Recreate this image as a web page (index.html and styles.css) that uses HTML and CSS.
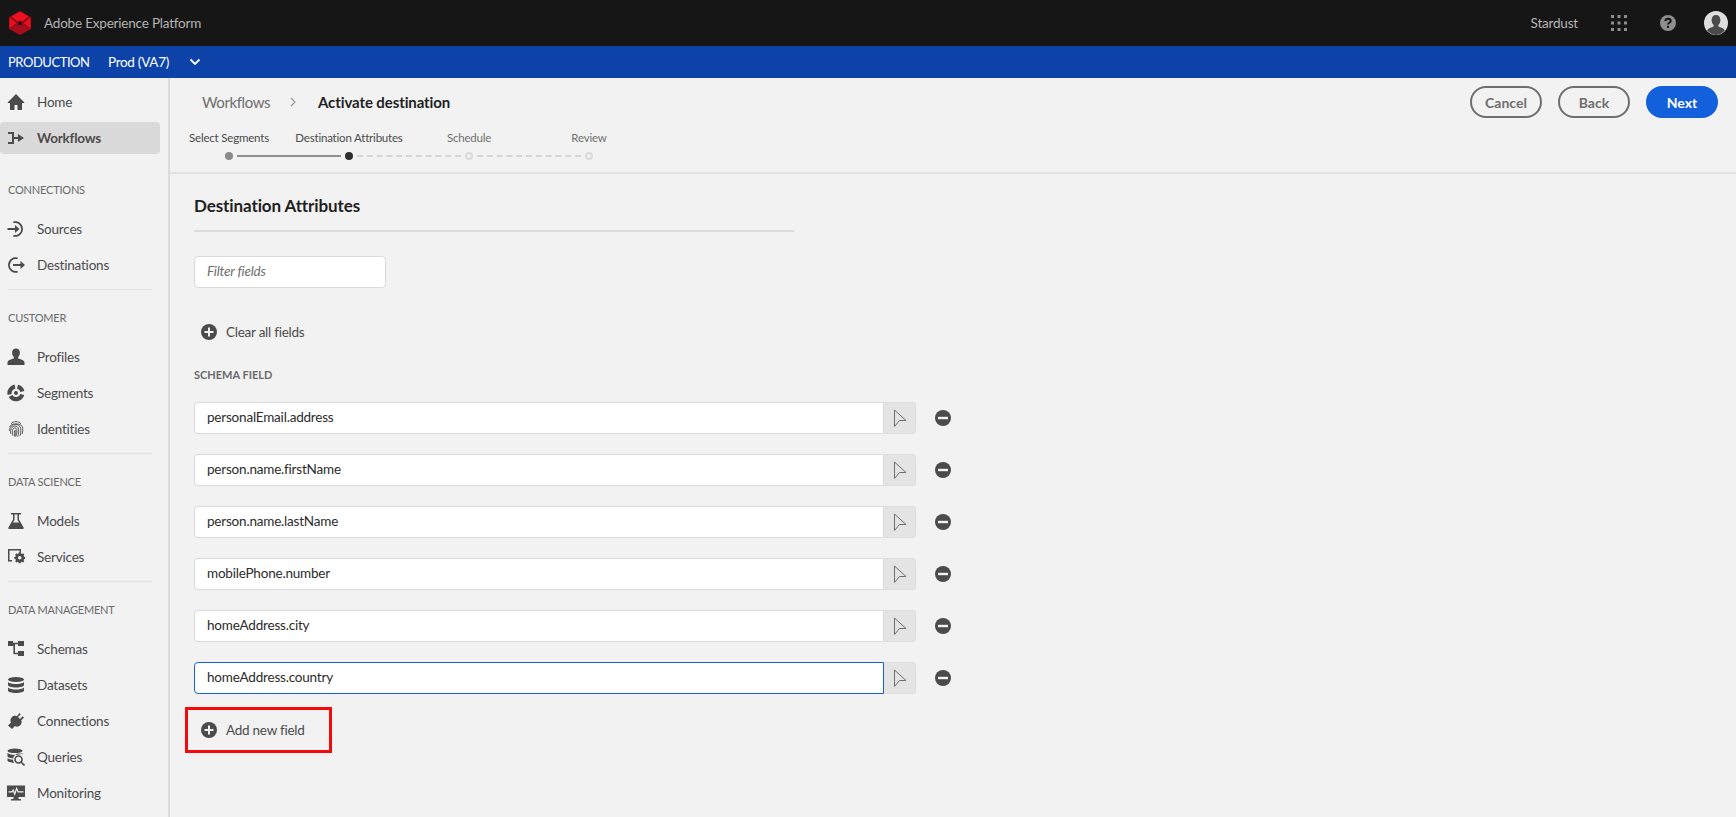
FILE: index.html
```html
<!DOCTYPE html>
<html lang="en">
<head>
<meta charset="utf-8">
<title>Activate destination</title>
<link rel="stylesheet" href="styles.css">
</head>
<body>
<header class="topbar">
  <svg class="logo" viewBox="0 0 22 24"><path fill="#8a0d1a" d="M11 0 22 6v12l-11 6L0 18V6z"/><path fill="#f0101f" d="M11 .5 2.500 5.500 8 10h6l5.500-4.500z"/><path fill="#ee0f1e" d="M.5 6.500 7.500 12 .5 17zM21.500 6.500 14.500 12l7 5z"/><path fill="#a50d1a" d="M7.500 13h7l7 5L11 24 .5 18z"/><path fill="#1d1012" d="M11 9.500 8.500 14.500 11 13.500l2.500 1z"/></svg>
  <span class="product">Adobe Experience Platform</span>
  <span class="org">Stardust</span>
  <svg class="apps" viewBox="0 0 16 16"><g fill="#8e8e8e"><rect width="3" height="3"/><rect x="6.500" width="3" height="3"/><rect x="13" width="3" height="3"/><rect y="6.500" width="3" height="3"/><rect x="6.500" y="6.500" width="3" height="3"/><rect x="13" y="6.500" width="3" height="3"/><rect y="13" width="3" height="3"/><rect x="6.500" y="13" width="3" height="3"/><rect x="13" y="13" width="3" height="3"/></g></svg>
  <svg class="help" viewBox="0 0 16 16"><circle cx="8" cy="8" r="8" fill="#8e8e8e"/><path fill="none" stroke="#161616" stroke-width="2" d="M5.300 6.200C5.500 4.500 6.600 3.700 8 3.700c1.600 0 2.700 1 2.700 2.200 0 1.800-2.700 1.900-2.700 3.700"/><rect x="7" y="10.800" width="2" height="2" fill="#161616"/></svg>
  <svg class="avatar" viewBox="0 0 24 24"><circle cx="12" cy="12" r="12" fill="#dedede"/><path fill="#4b4b4b" d="M12 4c2.800 0 4.400 2 4.400 5 0 2.300-.9 4-2 5v1.500c2 .9 5.600 1.500 6.300 4A12 12 0 0 1 12 24a12 12 0 0 1-8.700-4.500c.7-2.500 4.300-3.100 6.300-4V14c-1.100-1-2-2.700-2-5 0-3 1.600-5 4.400-5z"/></svg>
</header>
<div class="envbar">
  <span class="env">PRODUCTION</span>
  <span class="sandbox">Prod (VA7)</span>
  <svg class="chev" viewBox="0 0 12 8"><path fill="none" stroke="#fff" stroke-width="1.800" d="M1.500 1.500 6 6l4.500-4.500"/></svg>
</div>
<div class="shell">
  <nav class="sidebar">
    <a class="nav-item"><svg class="ni" viewBox="0 0 18 18"><path d="M9 1 .5 9.500 1 10h2v7h4.500v-5h3v5H15v-7h2l.5-.5z"/></svg>Home</a>
    <a class="nav-item active"><svg class="ni" viewBox="0 0 18 18"><path d="M1 3h6v5h4V5l6 4-6 4v-3H7v5H1v-2h4V5H1z"/></svg>Workflows</a>
    <h4 class="nav-label first">CONNECTIONS</h4>
    <a class="nav-item"><svg class="ni" viewBox="0 0 18 18"><path d="M6 1.500A7.800 7.800 0 1 1 6 16.500l.6-1.600A6.100 6.100 0 1 0 6.600 3.100zM.5 8.100h7.500V5l4.500 4L8 13v-3.100H.5z"/></svg>Sources</a>
    <a class="nav-item"><svg class="ni" viewBox="0 0 18 18"><path d="M11 1.500a7.800 7.800 0 1 0 0 15l-.6-1.600a6.100 6.100 0 1 1 0-11.800zM6 8.100h7.500V5l4.500 4-4.500 4V9.900H6z"/></svg>Destinations</a>
    <hr class="nav-rule">
    <h4 class="nav-label">CUSTOMER</h4>
    <a class="nav-item"><svg class="ni" viewBox="0 0 18 18"><path d="M9 .5c2.500 0 3.900 1.800 3.900 4.300 0 1.900-.8 3.400-1.700 4.200v1.500c2.200.8 5.800 1.300 6.300 3.800v2.700H.5v-2.700c.5-2.500 4.100-3 6.300-3.800V9C5.900 8.200 5.100 6.700 5.100 4.800 5.100 2.300 6.500.5 9 .5z"/></svg>Profiles</a>
    <a class="nav-item"><svg class="ni" viewBox="0 0 18 18"><g fill="none" stroke="#4b4b4b" stroke-width="4.200"><path d="M2.700 10.500A6.500 6.500 0 0 1 8 2.600"/><path d="M10.500 2.700A6.500 6.500 0 0 1 15.400 7.500"/><path d="M15.300 10.500A6.500 6.500 0 0 1 3.500 12"/></g><path d="M10.800 8.200A2 2 0 1 0 9 11a2 2 0 0 0 1.800-1.200z"/></svg>Segments</a>
    <a class="nav-item"><svg class="ni" viewBox="0 0 18 18"><g fill="none" stroke="#4b4b4b" stroke-width=".9"><path d="M4 3.600C6.500 1 11.500 1 14 3.600"/><path d="M2.500 7C4 2.800 14 2.800 15.500 7c.4 2 .4 4.500-.3 7"/><path d="M2.300 11C2.200 7 5.500 4.500 9 4.500c3.500 0 4.900 3 4.900 5.500 0 2-.2 4-.9 6"/><path d="M3.800 14c-.4-3-.3-5 1-6.500 2-2 5-1.800 6.300.2 1 1.800.6 6-.4 9"/><path d="M6 15.800c-.6-2.500-1.200-5 0-7 1-1.400 3-1.200 3.800.5.600 2-.2 5-1 7.200"/><path d="M8 16.800c-.3-2-1-4.500-.4-6 .4-.8 1-.8 1.200 0 .2 2-.4 3.500-1 5"/></g></svg>Identities</a>
    <hr class="nav-rule">
    <h4 class="nav-label">DATA SCIENCE</h4>
    <a class="nav-item"><svg class="ni" viewBox="0 0 18 18"><path d="M4 1h10v1.500h-2v5l4.600 8c.4 1-.2 1.500-1 1.500H2.400c-.8 0-1.400-.5-1-1.500l4.600-8v-5H4zm3.500 1.500v5.400L6 10.500h6l-1.500-2.600V2.500z"/></svg>Models</a>
    <a class="nav-item"><svg class="ni" viewBox="0 0 18 18"><path d="M1 1h13v5h-1.500V2.500h-10V12H5v1.500H1z"/><path d="M11.500 6.500h2l.3 1.400 1.200.5 1.200-.8 1.400 1.400-.8 1.200.5 1.200 1.300.3v2l-1.300.3-.5 1.200.8 1.200-1.400 1.400-1.200-.8-1.200.5-.3 1.200h-2l-.3-1.200-1.200-.5-1.200.8-1.400-1.400.8-1.200-.5-1.200-1.300-.3v-2l1.300-.3.5-1.200-.8-1.200 1.400-1.400 1.200.8 1.200-.5zM12.500 10.500a2 2 0 1 0 0 4 2 2 0 0 0 0-4z" fill-rule="evenodd" transform="translate(1.500 -1.500) scale(.9)"/></svg>Services</a>
    <hr class="nav-rule">
    <h4 class="nav-label">DATA MANAGEMENT</h4>
    <a class="nav-item"><svg class="ni" viewBox="0 0 18 18"><rect x="1" y="1" width="5" height="5"/><rect x="11" y="1" width="6" height="5"/><rect x="11" y="11" width="6" height="5"/><path d="M6 2.700h5v1.600H8V12.700h3v1.600H6.400V6H6z"/></svg>Schemas</a>
    <a class="nav-item"><svg class="ni" viewBox="0 0 18 18"><ellipse cx="9" cy="3.500" rx="8" ry="2.500"/><path d="M1 6c1.500 1.500 4.500 2 8 2s6.500-.5 8-2v3c0 1.400-3.600 2.500-8 2.500S1 10.400 1 9zM1 11.500c1.500 1.500 4.500 2 8 2s6.500-.5 8-2v3C17 15.900 13.400 17 9 17s-8-1.100-8-2.500z"/></svg>Datasets</a>
    <a class="nav-item"><svg class="ni" viewBox="0 0 18 18"><path d="M12.500 1l1.300 1.300L11 5l2 2 2.700-2.700L17 5.600 14.300 8.300c.8 2 .2 3.700-1 5-1.500 1.500-3.500 1.800-5.300.8l-3 3L1 13.500l3-3c-1-1.800-.7-3.800.8-5.300 1.300-1.200 3-1.800 5-1z"/></svg>Connections</a>
    <a class="nav-item"><svg class="ni" viewBox="0 0 18 18"><ellipse cx="8" cy="2.800" rx="7.500" ry="2.300"/><path d="M.5 5c1.500 1.300 4 1.800 7.500 1.800S14 6.300 15.500 5v1.500a6 6 0 0 0-9.400 3.900C3 10.200.5 9.400.5 8.300zM.5 10.300c1.200.8 3 1.300 5.500 1.500a6 6 0 0 0 1.200 3c-3.600-.1-6.700-1-6.700-2.300z"/><path fill="none" stroke="#4b4b4b" stroke-width="1.600" d="M11.500 8a3.500 3.500 0 1 1 0 7 3.500 3.500 0 0 1 0-7zM14 14l3.500 3.500"/></svg>Queries</a>
    <a class="nav-item"><svg class="ni" viewBox="0 0 18 18"><path d="M0 1.500h18V13h-6.500v2H14v1.500H4V15h2.500v-2H0z"/><path fill="none" stroke="#f2f2f2" stroke-width="1.200" d="M1.500 7.800H5l1.200-1.800 1.500 4.200L9.600 4.500l1.500 3.300h5.400"/></svg>Monitoring</a>
  </nav>
  <main class="main">
    <section class="pagehead">
      <div class="headrow">
        <div class="crumbs">
          <span class="crumb">Workflows</span>
          <svg class="crumb-sep" viewBox="0 0 6 10"><path fill="none" stroke="#9a9a9a" stroke-width="1.200" d="M1 1l4 4-4 4"/></svg>
          <strong class="crumb-now">Activate destination</strong>
        </div>
        <div class="actions">
          <button class="btn">Cancel</button>
          <button class="btn">Back</button>
          <button class="btn primary">Next</button>
        </div>
      </div>
      <ol class="steps">
        <li class="step done"><span class="step-label">Select Segments</span><span class="track"><i class="dot"></i></span></li>
        <li class="step current"><span class="step-label">Destination Attributes</span><span class="track"><i class="dot"></i></span></li>
        <li class="step todo"><span class="step-label">Schedule</span><span class="track"><i class="dot"></i></span></li>
        <li class="step todo"><span class="step-label">Review</span><span class="track"><i class="dot"></i></span></li>
      </ol>
    </section>
    <section class="content">
      <h2 class="title">Destination Attributes</h2>
      <div class="filter">Filter fields</div>
      <button class="link"><svg class="round" viewBox="0 0 16 16"><circle cx="8" cy="8" r="8"/><path class="glyph" d="M7 3.500h2V7h3.500v2H9v3.500H7V9H3.500V7H7z"/></svg>Clear all fields</button>
      <div class="col-head">SCHEMA FIELD</div>
      <div class="fields">
        <div class="field"><div class="value">personalEmail.address</div><span class="pick"><svg class="cursor" viewBox="0 0 14 19"><path d="M1.500 1v16.500l5-6h6.500z"/></svg></span><svg class="round minus" viewBox="0 0 16 16"><circle cx="8" cy="8" r="8"/><rect class="glyph" x="3" y="6.800" width="10" height="2.400"/></svg></div>
        <div class="field"><div class="value">person.name.firstName</div><span class="pick"><svg class="cursor" viewBox="0 0 14 19"><path d="M1.500 1v16.500l5-6h6.500z"/></svg></span><svg class="round minus" viewBox="0 0 16 16"><circle cx="8" cy="8" r="8"/><rect class="glyph" x="3" y="6.800" width="10" height="2.400"/></svg></div>
        <div class="field"><div class="value">person.name.lastName</div><span class="pick"><svg class="cursor" viewBox="0 0 14 19"><path d="M1.500 1v16.500l5-6h6.500z"/></svg></span><svg class="round minus" viewBox="0 0 16 16"><circle cx="8" cy="8" r="8"/><rect class="glyph" x="3" y="6.800" width="10" height="2.400"/></svg></div>
        <div class="field"><div class="value">mobilePhone.number</div><span class="pick"><svg class="cursor" viewBox="0 0 14 19"><path d="M1.500 1v16.500l5-6h6.500z"/></svg></span><svg class="round minus" viewBox="0 0 16 16"><circle cx="8" cy="8" r="8"/><rect class="glyph" x="3" y="6.800" width="10" height="2.400"/></svg></div>
        <div class="field"><div class="value">homeAddress.city</div><span class="pick"><svg class="cursor" viewBox="0 0 14 19"><path d="M1.500 1v16.500l5-6h6.500z"/></svg></span><svg class="round minus" viewBox="0 0 16 16"><circle cx="8" cy="8" r="8"/><rect class="glyph" x="3" y="6.800" width="10" height="2.400"/></svg></div>
        <div class="field focused"><div class="value">homeAddress.country</div><span class="pick"><svg class="cursor" viewBox="0 0 14 19"><path d="M1.500 1v16.500l5-6h6.500z"/></svg></span><svg class="round minus" viewBox="0 0 16 16"><circle cx="8" cy="8" r="8"/><rect class="glyph" x="3" y="6.800" width="10" height="2.400"/></svg></div>
      </div>
      <button class="link add"><svg class="round" viewBox="0 0 16 16"><circle cx="8" cy="8" r="8"/><path class="glyph" d="M7 3.500h2V7h3.500v2H9v3.500H7V9H3.500V7H7z"/></svg>Add new field</button>
    </section>
  </main>
</div>
</body>
</html>
```
FILE: styles.css
```css
* { box-sizing: border-box; }
html, body { height: 100%; }
body {
  margin: 0;
  height: 817px;
  overflow: hidden;
  display: flex;
  flex-direction: column;
  background: #f2f2f2;
  color: #4b4b4b;
  font-family: "Lato", "Liberation Sans", sans-serif;
  font-size: 13.500px;
  letter-spacing: -.2px;
}
.topbar {
  flex: 0 0 46px;
  display: flex;
  align-items: center;
  background: #161616;
  padding: 0 8px 0 9px;
}
.logo { width: 22px; height: 24px; margin-right: 13px; }
.product { color: #b4b4b4; }
.org { margin-left: auto; color: #b4b4b4; }
.apps { width: 16px; height: 16px; margin-left: 33px; }
.help { width: 16px; height: 16px; margin-left: 33px; }
.avatar { width: 24px; height: 24px; margin-left: 28px; }
.envbar {
  flex: 0 0 32px;
  display: flex;
  align-items: center;
  background: #0d43a9;
  color: #fff;
  padding-left: 8px;
}
.env { font-size: 13px; letter-spacing: -.45px; width: 100px; }
.sandbox { font-size: 13.500px; letter-spacing: -.3px; width: 81px; }
.chev { width: 12px; height: 8px; }
.shell { flex: 1; display: flex; min-height: 0; }
.sidebar {
  flex: 0 0 170px;
  border-right: 2px solid #dcdcdc;
  padding: 6px 0 0;
}
.nav-item {
  display: flex;
  align-items: center;
  height: 36px;
  padding-left: 7px;
  width: 160px;
  color: #4b4b4b;
}
.nav-item.active {
  height: 32px;
  margin: 2px 0;
  background: #dadada;
  border-radius: 4px;
  font-weight: 700;
}
.ni { width: 18px; height: 18px; margin-right: 12px; fill: #4b4b4b; flex: none; }
.nav-label {
  margin: 0;
  padding: 21px 0 14px 8px;
  font-size: 11px;
  line-height: 14px;
  font-weight: 400;
  letter-spacing: -.2px;
  color: #6a6a6a;
}
.nav-label.first { padding-top: 27px; }
.nav-rule {
  margin: 6px 0 0 8px;
  width: 144px;
  border: 0;
  border-top: 1px solid #e1e1e1;
}
.main { flex: 1; min-width: 0; }
.pagehead {
  height: 96px;
  border-bottom: 2px solid #e1e1e1;
  padding-top: 8px;
}
.headrow {
  display: flex;
  justify-content: space-between;
  align-items: center;
  height: 32px;
  padding: 0 18px 0 32px;
}
.crumbs { display: flex; align-items: center; }
.crumb { font-size: 15px; letter-spacing: -.4px; color: #6e6e6e; width: 88px; }
.crumb-sep { width: 6px; height: 10px; margin-right: 22px; }
.crumb-now { font-size: 15px; letter-spacing: -.1px; color: #1f1f1f; font-weight: 700; }
.actions { display: flex; gap: 16px; }
.btn {
  width: 72px;
  height: 32px;
  border: 2px solid #6e6e6e;
  border-radius: 16px;
  background: transparent;
  font: 700 14px "Lato", "Liberation Sans", sans-serif;
  color: #6e6e6e;
  padding: 0;
}
.btn.primary { background: #1360dc; border-color: #1360dc; color: #fff; }
.steps {
  list-style: none;
  display: flex;
  margin: 12px 0 0 -1px;
  padding: 0;
}
.step {
  width: 120px;
  display: flex;
  flex-direction: column;
  align-items: center;
  position: relative;
}
.step-label { font-size: 11.500px; letter-spacing: -.2px; line-height: 16px; white-space: nowrap; color: #4b4b4b; }
.step.todo .step-label { color: #707070; }
.track {
  height: 8px;
  margin-top: 6px;
  align-self: stretch;
  display: flex;
  justify-content: center;
  position: relative;
}
.dot { width: 8px; height: 8px; border-radius: 50%; background: #8a8a8a; }
.step.current .dot { background: #2f2f2f; }
.step.todo .dot { background: transparent; border: 2px solid #dadada; }
.step:not(:first-child) .track::before {
  content: "";
  position: absolute;
  right: calc(50% + 8px);
  top: 3px;
  width: 104px;
}
.step.current .track::before { border-top: 2px solid #8f8f8f; }
.step.todo .track::before { border-top: 2px dashed #d5d5d5; }
.content { padding: 0 0 0 24px; }
.title {
  margin: 0;
  width: 600px;
  height: 58px;
  padding-top: 20px;
  line-height: 24px;
  font-size: 17px;
  font-weight: 700;
  letter-spacing: -.1px;
  color: #1f1f1f;
  border-bottom: 2px solid #dcdcdc;
}
.filter {
  width: 192px;
  height: 32px;
  margin-top: 24px;
  line-height: 28px;
  padding-left: 12px;
  background: #fff;
  border: 1px solid #dadada;
  border-radius: 4px;
  font-style: italic;
  color: #6e6e6e;
}
.link {
  display: flex;
  align-items: center;
  background: none;
  border: 0;
  padding: 0;
  font: 400 13.500px "Lato", "Liberation Sans", sans-serif;
  letter-spacing: -.25px;
  color: #4b4b4b;
}
.round { width: 16px; height: 16px; margin-right: 9px; fill: #4b4b4b; flex: none; }
.round .glyph { fill: #f2f2f2; }
.content > .link { margin: 28px 0 0 7px; height: 32px; padding-left: 0; }
.col-head {
  margin-top: 20px;
  font-size: 11px;
  line-height: 14px;
  font-weight: 700;
  letter-spacing: 0;
  color: #6a6a6a;
}
.fields { margin-top: 20px; display: flex; flex-direction: column; gap: 20px; }
.field { display: flex; align-items: center; height: 32px; }
.value {
  width: 690px;
  height: 32px;
  line-height: 28px;
  padding-left: 12px;
  background: #fff;
  border: 1px solid #dadada;
  border-radius: 4px 0 0 4px;
  color: #2c2c2c;
}
.focused .value { border-color: #1360dc; }
.pick {
  width: 32px;
  height: 32px;
  display: flex;
  align-items: center;
  justify-content: center;
  background: #e4e4e4;
  border: 1px solid #dcdcdc;
  border-left: 0;
  border-radius: 0 4px 4px 0;
}
.cursor { width: 14px; height: 19px; fill: none; stroke: #6e6e6e; stroke-width: 1; }
.round.minus { margin: 0 0 0 19px; }
.content > .add {
  margin: 13px 0 0 -9px;
  width: 147px;
  height: 46px;
  padding-left: 13px;
  border: 3px solid #f40a0a;
}
```
